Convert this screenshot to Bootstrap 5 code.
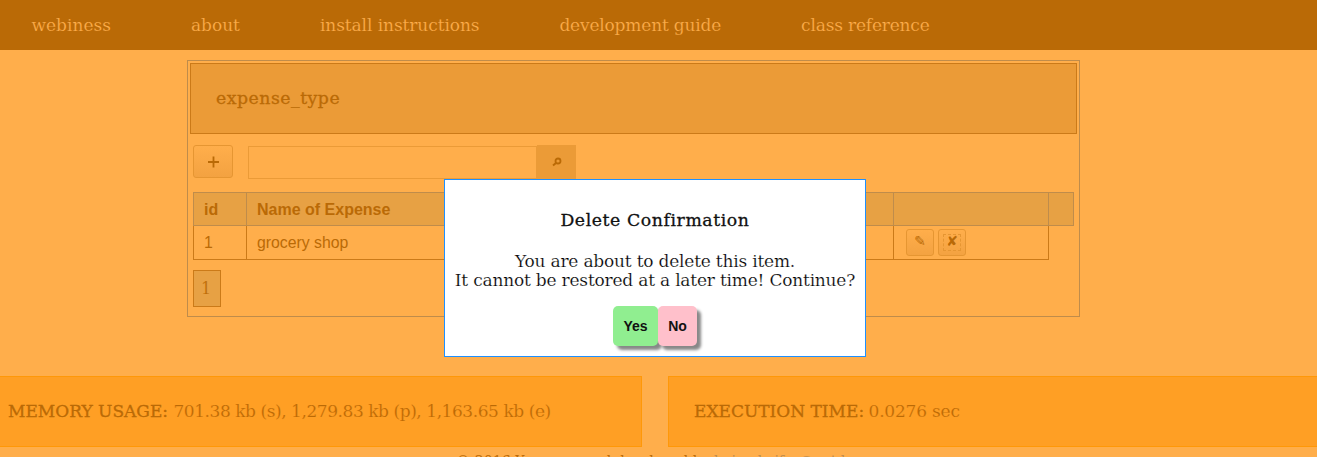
<!DOCTYPE html>
<html lang="en">
<head>
<meta charset="utf-8">
<title>webiness</title>
<link href="https://cdn.jsdelivr.net/npm/bootstrap@5.3.0/dist/css/bootstrap.min.css" rel="stylesheet">
<script src="https://cdn.jsdelivr.net/npm/bootstrap@5.3.0/dist/js/bootstrap.bundle.min.js"></script>
<style>
body{background:#ffae4b;color:#ba6a06;font:17px/20px "DejaVu Serif",serif;height:457px;overflow:hidden}
.thin{-webkit-text-stroke:.2px var(--under,#ffae4b)}
.firm{-webkit-text-stroke:.3px currentColor}
.topbar{height:50px;background:#ba6a06;--under:#ba6a06;padding-left:31.5px;gap:80px}
.topbar a{color:#ffae4b;text-decoration:none;white-space:nowrap}
.topbar a:nth-child(3){letter-spacing:-.08px}
.topbar a:nth-child(n+4){letter-spacing:-.18px}
.panel{width:893px;height:257px;margin:10px 0 0 187px;border:1px solid #bf8c4b;padding:2px}
.title-box{height:71px;border:1px solid #cb7a18;background:#eb9b37;padding:0 0 1px 25px;font-size:17.3px;letter-spacing:.5px}
.tools{margin:11px 0 0 3px;height:34px}
.tool{border:1px solid #e69632;border-radius:3px;background:linear-gradient(#ffae4b,#f3a241);color:#ba6a06;padding:0}
.add{width:40px;height:33px}
.search-field{width:289px;height:33px;margin:1px 0 0 15px;border:1px solid #eb9b37;border-radius:0;background:transparent}
.find{width:39px;height:34px;background:#eb9b37}
.grid-list{margin:13px 0 0 3px;width:880px;border-collapse:collapse;table-layout:fixed;font:16px/20px "Liberation Sans",sans-serif}
.grid-list th{height:33px;border:1px solid #bf8c4b;background:#e7a144;padding:2px 10px 0}
.grid-list td{height:34px;border:1px solid #cb7a18;padding:0 10px;font-size:15.8px}
.grid-list td:last-child{border:0}
.acts{padding-left:2px}
.act{width:28px;height:27px;font:14px/20px "DejaVu Sans",sans-serif}
.pencil{padding-bottom:3px}
.dashed{display:block;width:18px;height:17px;margin:0 auto;border:1px dashed #e69632;line-height:13px}
.page-no{width:28px;height:37px;margin:10px 0 0 3px;padding-right:2px;border:1px solid #cb7a18;background:#e7a144;--under:#e7a144;font-size:16px}
.stats{margin:59px -11px 0 -18px;gap:26px}
.stat{height:71px;width:660px;flex:none;border:1px solid #ff9808;background:#ff9f24;--under:#ff9f24;padding:0 0 2px 25px;white-space:pre}
.memory{letter-spacing:-.44px}
.elapsed{letter-spacing:-.2px;margin-left:-1px}
.credit{height:10px;overflow:hidden;padding:4px 0 0 456px;font-size:14px;line-height:20px;white-space:nowrap}
.credit a{color:#bf8c4b;text-decoration:none}
.credit-name{width:129px;flex:none;letter-spacing:.1px}
.dialog-box{position:absolute;left:444px;top:179px;width:422px;height:178px;background:#fff;border:1px solid #1e90ff;color:#111;--under:#fff;padding-top:30px}
.dialog-title{font-size:17.3px;letter-spacing:.58px}
.dialog-box p{font-size:17px;line-height:19px;margin:22px 0 16px;color:#000;white-space:nowrap;letter-spacing:-.2px}
.choice{height:40px;border:0;border-radius:5px;box-shadow:4px 4px 3px #888;font:bold 14px "Liberation Sans",sans-serif;color:#111;padding:0}
.yes{width:45px;background:#90ee90}
.no{width:39px;background:#ffc0cb}
</style>
</head>
<body>
<nav class="topbar d-flex align-items-center"><a class="thin" href="#">webiness</a><a class="thin" href="#">about</a><a class="thin" href="#">install instructions</a><a class="thin" href="#">development guide</a><a class="thin" href="#">class reference</a></nav>
<main class="panel">
<div class="title-box firm d-flex align-items-center">expense_type</div>
<div class="tools d-flex"><button class="tool add" aria-label="Add"><svg width="12" height="12" class="d-block mx-auto"><path d="M6.5 .5v11M1 6h11" stroke="currentColor" stroke-width="1.8"/></svg></button><input class="search-field" aria-label="Search"><span class="find d-flex align-items-center justify-content-center"><svg width="10" height="10" fill="none" stroke="currentColor"><circle cx="6" cy="4" r="2.5" stroke-width="1.8"/><path d="M4 6L1 8.5" stroke-width="2"/></svg></span></div>
<table class="grid-list"><colgroup><col style="width:53px"><col style="width:400px"><col style="width:247px"><col style="width:155px"><col style="width:25px"></colgroup>
<tr><th>id</th><th>Name of Expense</th><th></th><th></th><th></th></tr>
<tr><td>1</td><td>grocery shop</td><td></td><td><div class="acts d-flex gap-1"><button class="tool act pencil">✎</button><button class="tool act"><span class="dashed">✘</span></button></div></td><td></td></tr></table>
<div class="page-no thin d-flex align-items-center justify-content-center">1</div>
</main>
<section class="stats d-flex"><div class="stat d-flex align-items-center"><span class="firm">MEMORY USAGE: </span><span class="thin memory">701.38 kb (s), 1,279.83 kb (p), 1,163.65 kb (e)</span></div><div class="stat d-flex align-items-center"><span class="firm">EXECUTION TIME: </span><span class="thin elapsed">0.0276 sec</span></div></section>
<footer class="credit d-flex"><span class="credit-name">© 2016 Your name</span><span>and developed by <a href="#">bojan.kajfes@net.hr</a></span></footer>
<div class="dialog-box text-center" role="dialog"><div class="dialog-title firm">Delete Confirmation</div><p class="thin">You are about to delete this item.<br>It cannot be restored at a later time! Continue?</p><div class="d-flex justify-content-center"><button class="choice yes">Yes</button><button class="choice no">No</button></div></div>
</body>
</html>
